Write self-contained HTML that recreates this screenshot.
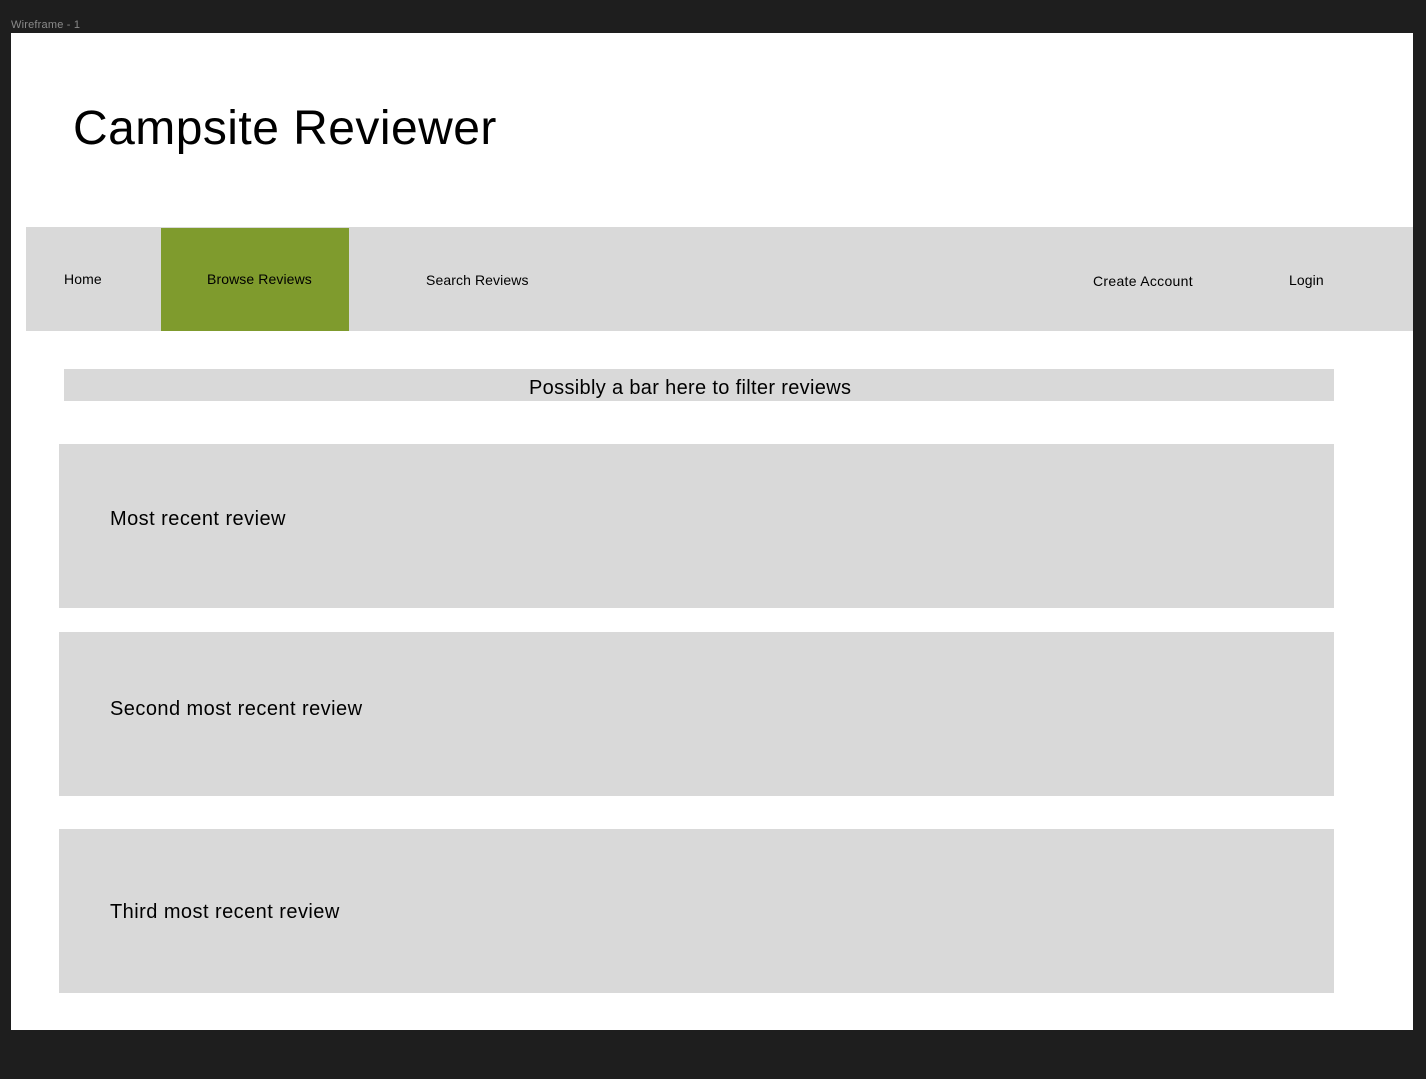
<!DOCTYPE html>
<html><head><style>
*{margin:0;padding:0;box-sizing:border-box}
body{width:1426px;height:1079px;background:#1e1e1e;position:relative;overflow:hidden;font-family:"Liberation Sans",sans-serif;color:#000}
.a{position:absolute;white-space:nowrap}
.g{background:#d9d9d9}
.n{font-size:14px;letter-spacing:0.1px}
.r{font-size:20px;letter-spacing:0.45px}
</style></head><body>
<div class="a" style="left:11px;top:19px;font-size:11px;color:#8a8a8a;letter-spacing:0.2px">Wireframe - 1</div>
<div class="a" style="left:11px;top:33px;width:1402px;height:997px;background:#fff"></div>
<div class="a" style="left:73px;top:99px;font-size:48px;line-height:60px;letter-spacing:0.45px">Campsite Reviewer</div>
<div class="a g" style="left:26px;top:227px;width:1387px;height:104px"></div>
<div class="a" style="left:161px;top:228px;width:188px;height:103px;background:#7f9b2d"></div>
<div class="a n" style="left:64px;top:271px">Home</div>
<div class="a n" style="left:207px;top:271px">Browse Reviews</div>
<div class="a n" style="left:426px;top:272px">Search Reviews</div>
<div class="a n" style="left:1093px;top:273px;letter-spacing:0.3px">Create Account</div>
<div class="a n" style="left:1289px;top:272px">Login</div>
<div class="a g" style="left:64px;top:369px;width:1270px;height:32px"></div>
<div class="a" style="left:529px;top:377px;font-size:20px;letter-spacing:0.33px">Possibly a bar here to filter reviews</div>
<div class="a g" style="left:59px;top:444px;width:1275px;height:164px"></div>
<div class="a r" style="left:110px;top:508px">Most recent review</div>
<div class="a g" style="left:59px;top:632px;width:1275px;height:164px"></div>
<div class="a r" style="left:110px;top:698px">Second most recent review</div>
<div class="a g" style="left:59px;top:829px;width:1275px;height:164px"></div>
<div class="a r" style="left:110px;top:901px">Third most recent review</div>
</body></html>
